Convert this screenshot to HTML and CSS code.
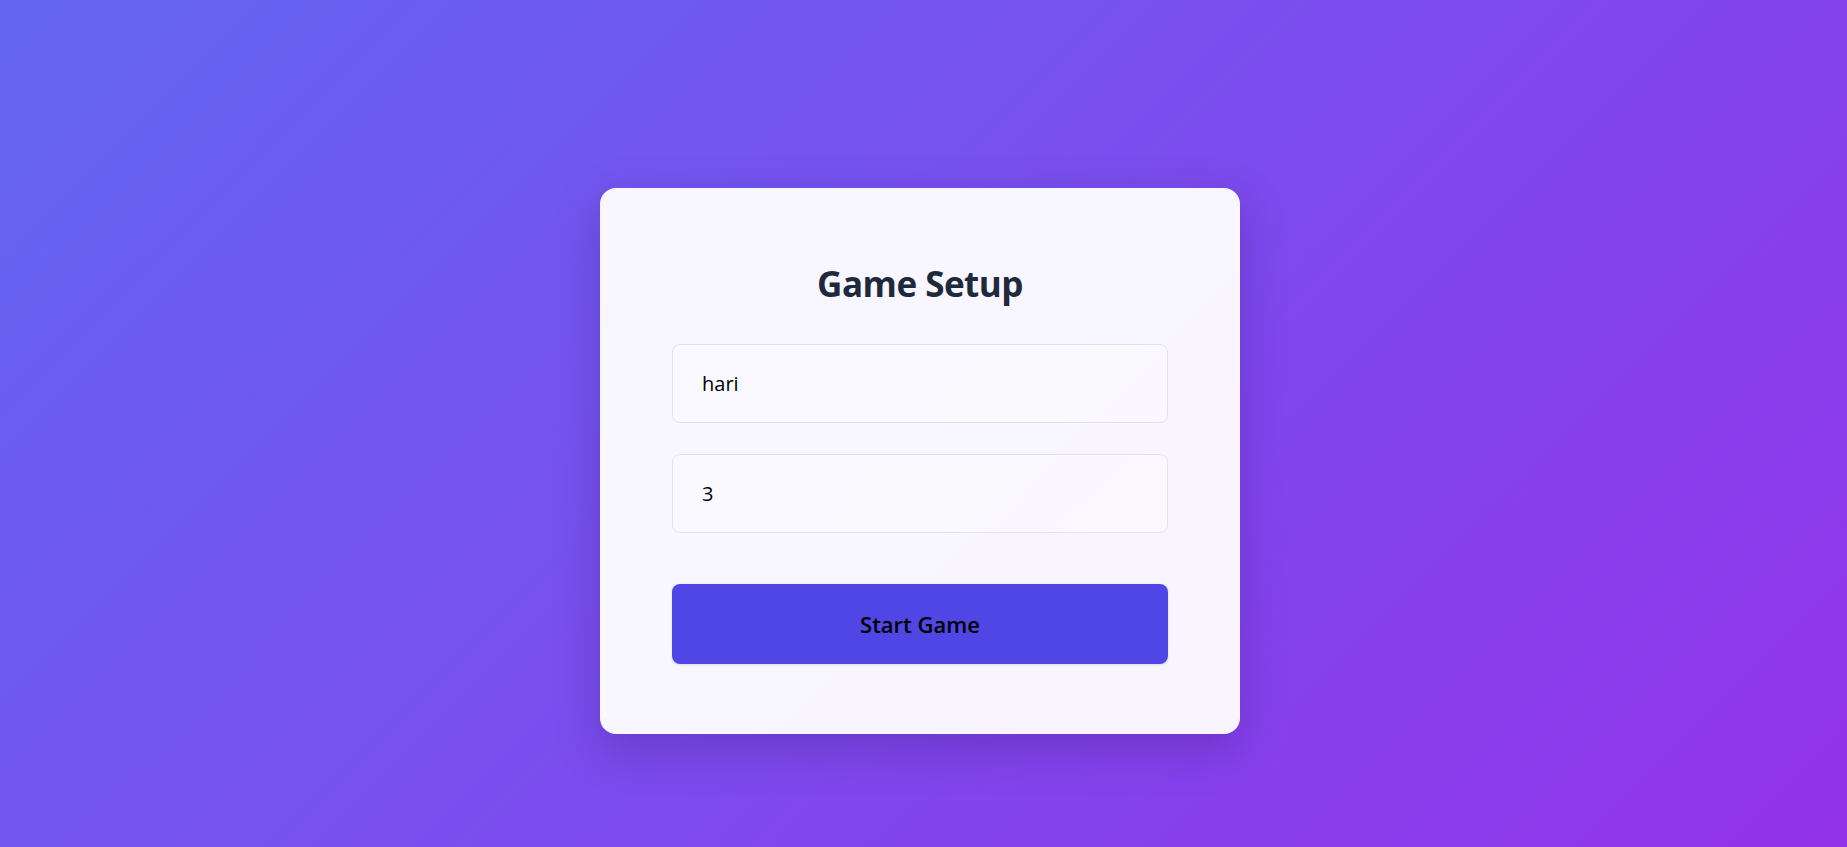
FILE: index.html
```html
<!DOCTYPE html>
<html lang="en">
<head>
<meta charset="utf-8">
<title>Game Setup</title>
<link rel="stylesheet" href="styles.css">
</head>
<body>
<main class="page">
  <section class="card">
    <h1 class="title">Game Setup</h1>
    <form class="setup-form">
      <input class="field" type="text" value="hari">
      <input class="field" type="number" value="3">
      <button class="start-btn" type="button">Start Game</button>
    </form>
  </section>
</main>
</body>
</html>
```

FILE: styles.css
```css
* {
  box-sizing: border-box;
}

html, body {
  margin: 0;
  height: 100%;
}

body {
  font-family: "Open Sans", "Noto Sans", sans-serif;
  background: linear-gradient(135deg, #6366f1 0%, #9333ea 100%);
  overflow: hidden;
}

.page {
  min-height: 100vh;
  padding: 188px 7px 0 0;
  display: flex;
  justify-content: center;
  align-items: flex-start;
}

.card {
  width: 640px;
  background: rgba(255, 255, 255, 0.95);
  border-radius: 16px;
  padding: 75px 72px 70px;
  box-shadow: 0 15px 45px rgba(40, 10, 90, 0.25);
}

.title {
  margin: 0 0 39px;
  text-align: center;
  font-size: 35px;
  font-weight: 700;
  line-height: 1.2;
  color: #1e293b;
  letter-spacing: -0.5px;
}

.setup-form {
  display: flex;
  flex-direction: column;
}

.field {
  height: 79px;
  width: 100%;
  padding: 0 29px;
  border: 1px solid #e3e2ea;
  border-radius: 8px;
  background: rgba(255, 255, 255, 0.3);
  font-family: inherit;
  font-size: 20px;
  color: #000;
  outline: none;
  -moz-appearance: textfield;
}

.field::-webkit-outer-spin-button,
.field::-webkit-inner-spin-button {
  -webkit-appearance: none;
  margin: 0;
}

.field + .field {
  margin-top: 31px;
}

.start-btn {
  margin-top: 51px;
  height: 80px;
  width: 100%;
  border: none;
  border-radius: 8px;
  background: #4f46e5;
  color: #000;
  font-family: inherit;
  font-size: 22px;
  font-weight: 600;
  cursor: pointer;
  box-shadow: 0 1px 3px rgba(0, 0, 0, 0.12);
}
```
